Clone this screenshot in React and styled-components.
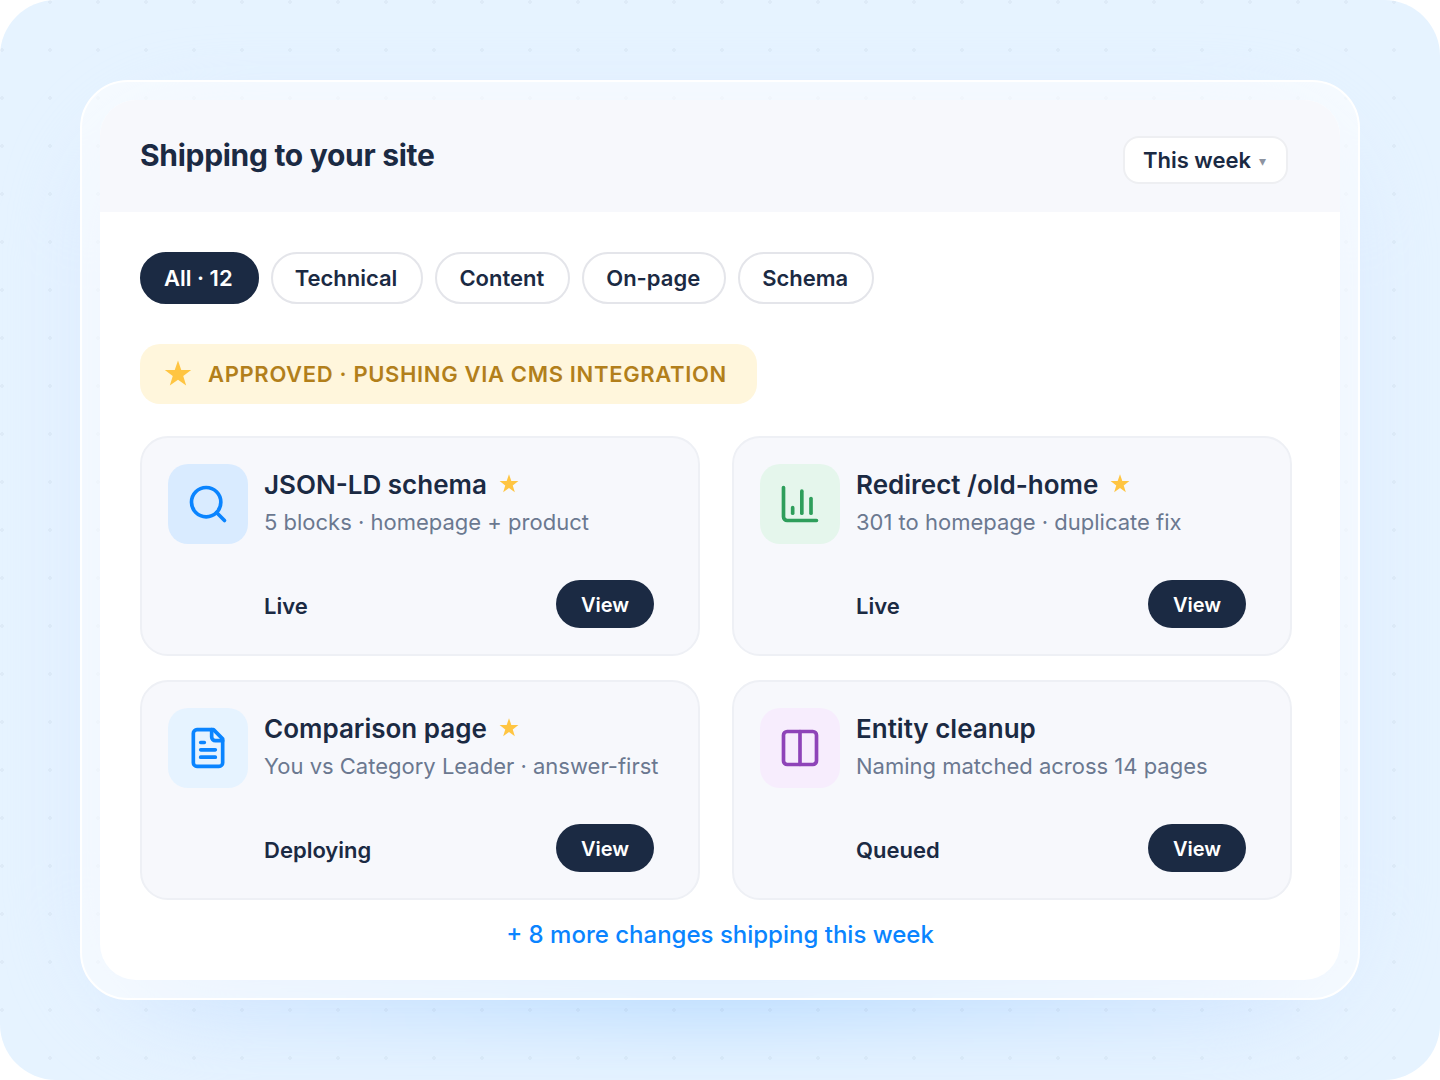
import React, { useState } from 'react';
import styled, { createGlobalStyle } from 'styled-components';
import { ChartColumn, Columns2, Search } from 'lucide-react';

const GlobalStyle = createGlobalStyle`
  * {
    box-sizing: border-box;
  }

  body {
    margin: 0;
    background: #ffffff;
    color: #1b2a43;
    font-family: Inter, 'Liberation Sans', sans-serif;
  }

  button,
  select {
    font-family: inherit;
    color: inherit;
    cursor: pointer;
  }
`;

const Stage = styled.main`
  position: relative;
  isolation: isolate;
  overflow: hidden;
  min-height: 100vh;
  padding: 80px;
  border-radius: 56px;
  background: #e6f3ff;

  &::after {
    content: '';
    position: absolute;
    inset: 0;
    z-index: -1;
    background: radial-gradient(circle at 2px 2px, rgba(27, 42, 67, 0.04) 2px, transparent 2px);
    background-size: 48px 48px;
  }
`;

const Glow = styled.div`
  position: absolute;
  inset: 120px 90px 60px;
  z-index: -1;
  border-radius: 120px;
  background: radial-gradient(ellipse 50% 40% at 50% 100%, #b4d9ff, #d9e9ff);
  filter: blur(40px);
`;

const Frame = styled.div`
  padding: 18px;
  border: 2px solid #ffffff;
  border-radius: 48px;
  background: rgba(255, 255, 255, 0.6);
`;

const Panel = styled.section`
  overflow: hidden;
  border-radius: 36px;
  background: #ffffff;
`;

const Header = styled.header`
  display: flex;
  align-items: flex-start;
  justify-content: space-between;
  padding: 36px 52px 28px 40px;
  background: #f7f8fc;
`;

const Title = styled.h1`
  margin: 0;
  font-size: 30px;
  font-weight: 700;
  line-height: 38px;
  letter-spacing: -0.01em;
`;

const Period = styled.label`
  display: flex;
  align-items: center;
  gap: 8px;
  height: 48px;
  padding: 0 20px 0 18px;
  border: 2px solid #eeeff2;
  border-radius: 16px;
  background: #ffffff;
`;

const PeriodSelect = styled.select`
  appearance: none;
  field-sizing: content;
  padding: 0;
  border: 0;
  background: transparent;
  font-size: 22px;
  font-weight: 600;
`;

const Caret = styled.span`
  color: #8d94a1;
  font-size: 14px;
`;

const Body = styled.div`
  padding: 40px 48px 30px 40px;
`;

const Filters = styled.div`
  display: flex;
  flex-wrap: wrap;
  gap: 12px;
`;

const Filter = styled.button`
  height: 52px;
  padding: 0 24px 0 22px;
  border: 2px solid ${(props) => (props.$active ? '#1b2a43' : '#e4e5ea')};
  border-radius: 26px;
  background: ${(props) => (props.$active ? '#1b2a43' : '#ffffff')};
  color: ${(props) => (props.$active ? '#ffffff' : '#1b2a43')};
  font-size: 22px;
  font-weight: 600;
`;

const Banner = styled.p`
  display: flex;
  align-items: center;
  gap: 16px;
  width: fit-content;
  height: 60px;
  margin: 40px 0 32px;
  padding: 0 30px 0 24px;
  border-radius: 20px;
  background: #fff6dc;
  color: #b27f1b;
  font-size: 22px;
  font-weight: 600;
  letter-spacing: 0.03em;
`;

const Grid = styled.div`
  display: grid;
  grid-template-columns: repeat(2, minmax(0, 1fr));
  gap: 24px 32px;
`;

const Card = styled.article`
  padding: 26px;
  border: 2px solid #eef0f5;
  border-radius: 28px;
  background: #f7f8fc;
`;

const CardTop = styled.div`
  display: flex;
  gap: 16px;
`;

const Tile = styled.div`
  display: flex;
  flex: none;
  align-items: center;
  justify-content: center;
  width: 80px;
  height: 80px;
  border-radius: 20px;
  background: ${(props) => props.$bg};
  color: ${(props) => props.$color};
`;

const CardText = styled.div`
  padding-top: 4px;
`;

const CardTitle = styled.h2`
  display: flex;
  align-items: center;
  gap: 12px;
  margin: 0;
  font-size: 26px;
  font-weight: 600;
  line-height: 34px;

  svg {
    margin-bottom: 2px;
  }
`;

const CardDetail = styled.p`
  margin: 6px 0 0;
  color: #6b7890;
  font-size: 22px;
  line-height: 28px;
  white-space: nowrap;
`;

const CardBottom = styled.div`
  display: flex;
  align-items: center;
  justify-content: space-between;
  margin-top: 36px;
  padding: 0 18px 0 96px;
`;

const Status = styled.span`
  padding-top: 4px;
  font-size: 22px;
  font-weight: 600;
`;

const ViewButton = styled.button`
  height: 48px;
  padding: 2px 25px 0;
  border: 0;
  border-radius: 24px;
  background: #1b2a43;
  color: #ffffff;
  font-size: 20px;
  font-weight: 600;
`;

const More = styled.footer`
  margin: 20px -8px 0 0;
  text-align: center;
`;

const MoreLink = styled.a`
  color: #0a84ff;
  font-size: 24px;
  font-weight: 500;
  line-height: 30px;
  text-decoration: none;
`;

function Star({ size }) {
  return (
    <svg width={size} height={size} viewBox="0 0 24 24" fill="#ffc542" aria-hidden="true">
      <path d="M12 0.4l2.8 8.1h8.5l-6.8 5.2 2.5 8.2-7-5-7 5 2.5-8.2-6.8-5.2h8.5z" />
    </svg>
  );
}

function Document({ size }) {
  return (
    <svg
      width={size}
      height={size}
      viewBox="0 0 24 24"
      fill="none"
      stroke="currentColor"
      strokeWidth="2"
      strokeLinecap="round"
      strokeLinejoin="round"
      aria-hidden="true"
    >
      <path d="M15 2H6a2 2 0 0 0-2 2v16a2 2 0 0 0 2 2h12a2 2 0 0 0 2-2V7Z" />
      <path d="M14 2v4a2 2 0 0 0 2 2h4" />
      <path d="M10 9H8M16 13H8M16 17H8" />
    </svg>
  );
}

const filters = ['All · 12', 'Technical', 'Content', 'On-page', 'Schema'];

const changes = [
  {
    title: 'JSON-LD schema',
    detail: '5 blocks · homepage + product',
    status: 'Live',
    starred: true,
    icon: Search,
    bg: '#d9ebff',
    color: '#0a84ff',
  },
  {
    title: 'Redirect /old-home',
    detail: '301 to homepage · duplicate fix',
    status: 'Live',
    starred: true,
    icon: ChartColumn,
    bg: '#e5f6ec',
    color: '#2e9e5b',
  },
  {
    title: 'Comparison page',
    detail: 'You vs Category Leader · answer-first',
    status: 'Deploying',
    starred: true,
    icon: Document,
    bg: '#e6f3ff',
    color: '#0a84ff',
  },
  {
    title: 'Entity cleanup',
    detail: 'Naming matched across 14 pages',
    status: 'Queued',
    starred: false,
    icon: Columns2,
    bg: '#f7edfd',
    color: '#8e44b8',
  },
];

function ChangeCard({ change }) {
  const Icon = change.icon;

  return (
    <Card>
      <CardTop>
        <Tile $bg={change.bg} $color={change.color}>
          <Icon size={44} />
        </Tile>
        <CardText>
          <CardTitle>
            {change.title}
            {change.starred && <Star size={20} />}
          </CardTitle>
          <CardDetail>{change.detail}</CardDetail>
        </CardText>
      </CardTop>
      <CardBottom>
        <Status>{change.status}</Status>
        <ViewButton type="button">View</ViewButton>
      </CardBottom>
    </Card>
  );
}

function App() {
  const [filter, setFilter] = useState(filters[0]);

  return (
    <>
      <GlobalStyle />
      <Stage>
        <Glow />
        <Frame>
          <Panel>
            <Header>
              <Title>Shipping to your site</Title>
              <Period>
                <PeriodSelect aria-label="Period">
                  <option>This week</option>
                </PeriodSelect>
                <Caret aria-hidden="true">▾</Caret>
              </Period>
            </Header>
            <Body>
              <Filters>
                {filters.map((name) => (
                  <Filter
                    key={name}
                    type="button"
                    $active={name === filter}
                    aria-pressed={name === filter}
                    onClick={() => setFilter(name)}
                  >
                    {name}
                  </Filter>
                ))}
              </Filters>
              <Banner>
                <Star size={28} />
                APPROVED · PUSHING VIA CMS INTEGRATION
              </Banner>
              <Grid>
                {changes.map((change) => (
                  <ChangeCard key={change.title} change={change} />
                ))}
              </Grid>
              <More>
                <MoreLink href="#more">+ 8 more changes shipping this week</MoreLink>
              </More>
            </Body>
          </Panel>
        </Frame>
      </Stage>
    </>
  );
}

export default App;
